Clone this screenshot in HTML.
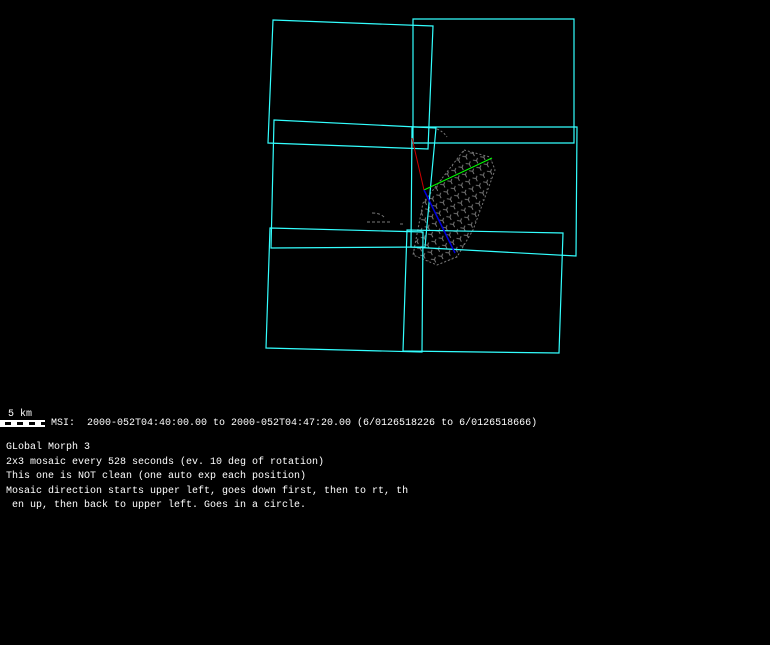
<!DOCTYPE html>
<html><head><style>
body{margin:0;background:#000;width:770px;height:645px;overflow:hidden;position:relative}
.t{position:absolute;left:6px;font:10px/14.5px "Liberation Mono",monospace;color:#fff;white-space:pre}
</style></head><body>
<svg width="770" height="645" style="position:absolute;left:0;top:0">
<defs><pattern id="p" width="8" height="8" patternUnits="userSpaceOnUse" patternTransform="rotate(-25)">
<path d="M1 1l3 2M4 3l2-2M4 3v3" stroke="#777" stroke-width="1" fill="none"/></pattern></defs>
<polygon points="464,150 490,157 495,170 473,230 457,257 437,265 413,255 423,203" fill="url(#p)" stroke="#777" stroke-dasharray="2,2"/>
<path d="M437,129 Q444,132 447,137" stroke="#777" fill="none" stroke-dasharray="2,2"/>
<path d="M372,213 Q380,213 384,217 M367,222 h25 M400,224 h5" stroke="#777" fill="none" stroke-dasharray="3,2"/>
<g fill="none" stroke="#3ff" stroke-width="1.2">
<polygon points="273,20 433,26 428,149 268,143"/>
<polygon points="413,19 574,19 574,143 413,143"/>
<polygon points="274,120 436,128 425,247 271,248"/>
<polygon points="412,127 577,127 576,256 411,247"/>
<polygon points="270,228 423,232 422,352 266,348"/>
<polygon points="407,230 563,233 559,353 403,351"/>
</g>
<line x1="412" y1="138" x2="424" y2="190" stroke="#c00"/>
<line x1="424" y1="190" x2="492" y2="158" stroke="#0f0"/>
<line x1="424" y1="190" x2="455" y2="253" stroke="#00d" stroke-width="1.5"/>
<rect x="0" y="420" width="45" height="7" fill="#fff"/>
<path d="M5 423.5h6M17 423.5h6M29 423.5h6M41 423.5h4" stroke="#000" stroke-width="3"/>
</svg>
<div class="t" style="left:8px;top:408px">5 km</div>
<div class="t" style="left:51px;top:417px">MSI:  2000-052T04:40:00.00 to 2000-052T04:47:20.00 (6/0126518226 to 6/0126518666)</div>
<div class="t" style="top:441px">GLobal Morph 3
2x3 mosaic every 528 seconds (ev. 10 deg of rotation)
This one is NOT clean (one auto exp each position)
Mosaic direction starts upper left, goes down first, then to rt, th
 en up, then back to upper left. Goes in a circle.</div>
</body></html>
